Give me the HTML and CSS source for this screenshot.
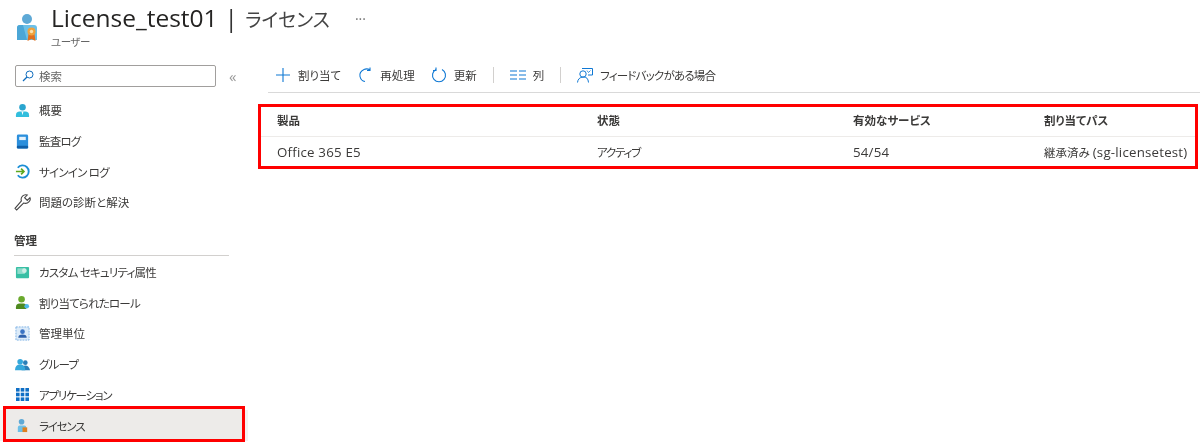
FILE: index.html
```html
<!DOCTYPE html>
<html lang="ja">
<head>
  <meta charset="UTF-8" />
  <title>License_test01 | ライセンス</title>
  <link rel="stylesheet" href="styles.css">
</head>
<body>
  <!-- Page title -->
  <header class="page-head">
    <svg class="head-icon" viewBox="0 0 20 28">
      <circle cx="10" cy="6" r="5" fill="#5ea9d6"/>
      <path d="M0 27V15q0-3 3-3h14q3 0 3 3v12z" fill="#6cc0e8"/>
      <path d="M0 27V15q0-3 3-3h3l4 15z" fill="#4ba6d6"/>
      <path d="M11.5 21l-1 7 4-2 4 2-1-7z" fill="#e0701f"/>
      <circle cx="14.500" cy="18.500" r="4" fill="#f0a23c"/>
      <circle cx="14.500" cy="18.500" r="1.700" fill="#fbe2b0"/>
    </svg>
    <div class="head-text">
      <h1 class="title">License_test01<span class="bar">|</span><span class="title-sub">ライセンス</span><span class="more">···</span></h1>
      <div class="kind">ユーザー</div>
    </div>
  </header>

  <div class="layout">
    <!-- Left menu -->
    <aside class="sidebar">
      <div class="search-row">
        <div class="search">
          <svg class="search-icon" viewBox="0 0 12 12"><circle cx="7.500" cy="4.500" r="3.500" fill="none" stroke="#0f6cbd" stroke-width="1"/><path d="M5 7L1 11" stroke="#0f6cbd" stroke-width="1.200"/></svg>
          <span>検索</span>
        </div>
        <span class="collapse">«</span>
      </div>

      <nav class="nav">
        <a class="nav-item">
          <svg class="nav-icon" viewBox="0 0 16 16"><circle cx="8" cy="4.500" r="3.500" fill="#2aa5cf"/><path d="M1 15v-2q0-4 4-4h6q4 0 4 4v2z" fill="#32bedd"/><path d="M7 9h2l-1 4z" fill="#fff"/></svg>
          概要
        </a>
        <a class="nav-item kana">
          <svg class="nav-icon" viewBox="0 0 16 16"><rect x="2" y="0.500" width="12" height="15" rx="1.500" fill="#2b8fdc"/><rect x="4.500" y="3" width="7" height="3.500" fill="#e3f1fb"/><rect x="2" y="12.500" width="12" height="3" rx="1" fill="#0f5fa8"/></svg>
          監査ログ
        </a>
        <a class="nav-item kana">
          <svg class="nav-icon" viewBox="0 0 16 16"><path d="M3 4a6.500 6.500 0 1 1 0 8" fill="none" stroke="#1c8fd6" stroke-width="2"/><path d="M1 8h8M6.500 5l3 3-3 3" fill="none" stroke="#5da81f" stroke-width="1.800"/></svg>
          サインイン ログ
        </a>
        <a class="nav-item">
          <svg class="nav-icon wrench" viewBox="0 0 16 16"><path d="M1 13.500l1.500 1.500 6.500-6.500q3 1 5-1t1-4L12.500 6 10 3.500l2.500-2.500q-2.500-1-4.500 1t-1 4.500z" fill="none" stroke="#444" stroke-width="1"/></svg>
          問題の診断と解決
        </a>
      </nav>

      <div class="nav-section">管理</div>

      <nav class="nav">
        <a class="nav-item kana">
          <svg class="nav-icon" viewBox="0 0 16 16"><rect x="1" y="2" width="14" height="12" rx="1" fill="#38bfa4"/><rect x="2.500" y="3.500" width="8" height="6" fill="#8fdccb"/><circle cx="10" cy="6" r="2.500" fill="#cfeee6"/></svg>
          カスタム セキュリティ属性
        </a>
        <a class="nav-item kana">
          <svg class="nav-icon" viewBox="0 0 16 16"><circle cx="7" cy="4.500" r="3.500" fill="#6aa92d"/><path d="M1 15v-2q0-4 4-4h4q3 0 3 3v3z" fill="#4f8a1f"/><circle cx="12.500" cy="12" r="2.500" fill="#4fb8e8"/></svg>
          割り当てられたロール
        </a>
        <a class="nav-item">
          <svg class="nav-icon" viewBox="0 0 16 16"><rect x="1" y="1" width="14" height="14" fill="#dcebf9" stroke="#7fb2e5" stroke-dasharray="2 1"/><circle cx="8" cy="6" r="2.500" fill="#3a73c4"/><path d="M3.500 12.500q0-3.500 4.500-3.500t4.500 3.500z" fill="#2f62ad"/></svg>
          管理単位
        </a>
        <a class="nav-item kana">
          <svg class="nav-icon" viewBox="0 0 16 16"><circle cx="11" cy="6" r="2.500" fill="#2a7fb8"/><path d="M7 14q0-5 4-5t5 5z" fill="#2a7fb8"/><circle cx="5.500" cy="5" r="3" fill="#35a8dc"/><path d="M0 14q0-6 5.500-6t5.500 6z" fill="#35a8dc"/></svg>
          グループ
        </a>
        <a class="nav-item kana tight">
          <svg class="nav-icon" viewBox="0 0 15 15"><g fill="#0f6fc6"><rect x="1" y="1" width="3.600" height="3.600"/><rect x="5.700" y="1" width="3.600" height="3.600"/><rect x="10.400" y="1" width="3.600" height="3.600"/><rect x="1" y="5.700" width="3.600" height="3.600"/><rect x="5.700" y="5.700" width="3.600" height="3.600"/><rect x="10.400" y="5.700" width="3.600" height="3.600"/><rect x="1" y="10.400" width="3.600" height="3.600"/><rect x="5.700" y="10.400" width="3.600" height="3.600"/><rect x="10.400" y="10.400" width="3.600" height="3.600"/></g></svg>
          アプリケーション
        </a>
        <a class="nav-item kana tight active">
          <svg class="nav-icon" viewBox="0 0 16 16"><circle cx="7" cy="4" r="3" fill="#5ea9d6"/><path d="M3 15V10q0-2 2-2h5q2 0 2 2v5z" fill="#6cc0e8"/><rect x="8" y="10" width="5" height="5" fill="#e0801f"/></svg>
          ライセンス
        </a>
      </nav>
    </aside>

    <!-- Main content -->
    <main class="content">
      <div class="toolbar">
        <button class="tool">
          <svg class="tool-icon" viewBox="0 0 16 16"><path d="M8 1v14M1 8h14" stroke="#0f78d4" stroke-width="1.100" fill="none"/></svg>
          割り当て
        </button>
        <button class="tool">
          <svg class="tool-icon" viewBox="0 0 16 16"><path d="M7 2.500Q2 5 3 9.500t5 5" stroke="#0f78d4" stroke-width="1.100" fill="none"/><path d="M7 2.500Q10 1 13 3M13 0.500V3.500H10" stroke="#0f78d4" stroke-width="1.100" fill="none"/></svg>
          再処理
        </button>
        <button class="tool">
          <svg class="tool-icon" viewBox="0 0 16 16"><path d="M5 2.500a6.500 6.500 0 1 0 6 0" stroke="#0f78d4" stroke-width="1.100" fill="none"/><path d="M5 .5v3H2" stroke="#0f78d4" stroke-width="1.100" fill="none"/></svg>
          更新
        </button>
        <span class="tool-sep"></span>
        <button class="tool">
          <svg class="tool-icon" viewBox="0 0 16 16"><path d="M0 4h7M9 4h7M0 8h7M9 8h7M0 12h7M9 12h7" stroke="#0f78d4" stroke-width="1.100" fill="none"/></svg>
          列
        </button>
        <span class="tool-sep"></span>
        <button class="tool kana">
          <svg class="tool-icon" viewBox="0 0 16 16"><circle cx="6" cy="7" r="3.200" stroke="#0f78d4" fill="none"/><path d="M.5 15.500q.5-5 5.500-5.500t5.500 5.500M5 1.500h10.500V8H11" stroke="#0f78d4" fill="none"/><path d="M10 3.500l1.500 2 2-2" stroke="#0f78d4" fill="none" stroke-width=".8"/></svg>
          フィードバックがある場合
        </button>
      </div>

      <table class="grid">
        <thead>
          <tr>
            <th class="col-product">製品</th>
            <th class="col-state">状態</th>
            <th class="col-services">有効なサービス</th>
            <th>割り当てパス</th>
          </tr>
        </thead>
        <tbody>
          <tr>
            <td><span class="latin">Office 365 E5</span></td>
            <td class="tight">アクティブ</td>
            <td><span class="latin">54/54</span></td>
            <td>継承済み <span class="latin">(sg-licensetest)</span></td>
          </tr>
        </tbody>
      </table>
    </main>
  </div>
</body>
</html>
```

FILE: styles.css
```css
/* Global reset & base */
* { box-sizing: border-box; margin: 0; padding: 0; }
html, body { height: 100%; overflow: hidden; }
body {
  font-family: 'Open Sans', 'Noto Sans CJK JP', sans-serif;
  font-size: 11.5px;
  font-feature-settings: "palt";
  background: #fff;
  color: #3b3a39;
  filter: blur(0.35px);
}
/* katakana runs sit closer together than the font's defaults */
.kana { letter-spacing: -0.8px; }
.tight { letter-spacing: -1.200px; }

/* Page title */
.page-head {
  display: flex;
  align-items: flex-start;
  height: 59px;
  padding: 3px 0 0 17px;
  gap: 14px;
}
.head-icon { width: 20px; height: 28px; margin-top: 10px; }
.title {
  font-size: 24.500px;
  font-weight: 400;
  line-height: 30px;
  color: #252423;
  white-space: nowrap;
}
.bar { margin: 0 7px; color: #333; }
.title-sub { font-size: 19px; color: #444; }
.more { margin-left: 25px; font-size: 14px; color: #777; vertical-align: 3px; }
.kind { font-size: 10.500px; line-height: 14px; color: #666; letter-spacing: -0.5px; }

/* Two columns under the title */
.layout { display: flex; }
.sidebar { width: 258px; flex: none; padding-top: 6px; }
.content { flex: 1; padding-top: 6px; min-width: 0; }

/* Search box */
.search-row { display: flex; align-items: center; padding-left: 15px; height: 22px; }
.search {
  width: 201px;
  height: 22px;
  display: flex;
  align-items: center;
  gap: 5px;
  padding-left: 6px;
  border: 1px solid #a19f9d;
  border-radius: 2px;
  color: #666;
}
.search-icon { width: 12px; height: 12px; }
.collapse { margin-left: 13px; font-size: 15px; line-height: 20px; color: #999; }

/* Left menu */
.nav { display: flex; flex-direction: column; }
.nav:first-of-type { margin-top: 8px; }
.nav-item {
  display: flex;
  align-items: center;
  gap: 9px;
  height: 30.700px;
  padding-left: 15px;
  white-space: nowrap;
}
.nav-icon { width: 15px; height: 15px; flex: none; }
.wrench { width: 17px; height: 17px; margin: 0 -1px; }
.nav-section {
  margin: 15px 29px 0 14px;
  padding-bottom: 7px;
  height: 23px;
  line-height: 16px;
  font-weight: 600;
  border-bottom: 1px solid #d2d0ce;
}
.nav-section + .nav { margin-top: 1px; }
.nav-item.active {
  position: relative;
  z-index: 0;
  width: 248px;
  background: #f3f2f1;
}
/* red marker drawn over the selected row */
.nav-item.active::after {
  content: "";
  position: absolute;
  z-index: -1;
  top: -4px;
  right: 3px;
  bottom: -1px;
  left: 3px;
  background: #edebe9;
  border: 3px solid #f00;
}

/* Command bar */
.toolbar {
  display: flex;
  align-items: center;
  height: 28px;
  margin-left: 10px;
  padding: 0 0 7px 7px;
  gap: 16px;
  border-bottom: 1px solid #d9d9d9;
}
.tool {
  display: flex;
  align-items: center;
  gap: 7px;
  background: none;
  border: none;
  font: inherit;
  font-feature-settings: "palt";
  color: #3b3a39;
  white-space: nowrap;
}
.tool.kana { letter-spacing: -0.8px; }
.tool-icon { width: 16px; height: 16px; flex: none; }
.tool-sep { width: 1px; height: 16px; background: #d2d0ce; }

/* License table */
.grid {
  width: 940px;
  margin-top: 11px;
  border-collapse: collapse;
  table-layout: fixed;
  outline: 3px solid #f00;
  outline-offset: -3px;
}
.grid th, .grid td {
  text-align: left;
  padding-left: 19px;
  white-space: nowrap;
  height: 32px;
}
.grid td { height: 33px; padding-bottom: 2px; }
.grid th { font-weight: 600; border-bottom: 1px solid #edebe9; }
.latin { font-size: 13.300px; letter-spacing: 0.2px; }
.col-product { width: 320px; }
.col-state { width: 256px; }
.col-services { width: 191px; }
```
